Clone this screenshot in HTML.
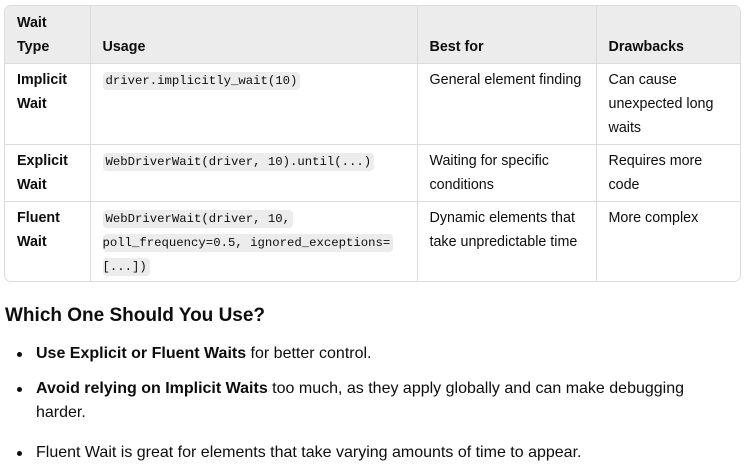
<!DOCTYPE html>
<html><head><meta charset="utf-8"><style>
body{margin:0;background:#fff;color:#0d0d0d;font-family:"Liberation Sans",sans-serif;width:749px;height:469px;overflow:hidden;position:relative}
.tbl{position:absolute;left:4px;top:5px;width:735px;height:275px;border:1px solid #dcdcdc;border-radius:7px;overflow:hidden}
table{border-collapse:collapse;width:100%;font-size:14.3px;line-height:24px;table-layout:fixed}
td,th{border-right:1px solid #dcdcdc;border-bottom:1px solid #dcdcdc;padding:4px 12px 4px 12px;vertical-align:top;text-align:left;white-space:nowrap;line-height:24px}
th{background:#ececec;font-weight:bold;vertical-align:bottom}
tr td:last-child,tr th:last-child{border-right:none}
tr:last-child td{border-bottom:none}
td.b{font-weight:bold}
code{font-family:"Liberation Mono",monospace;font-size:12.3px;line-height:1;background:#ececec;border-radius:4px;padding:2px 3px}
h3{position:absolute;left:5px;top:305px;margin:0;font-size:19px;font-weight:bold}
ul{position:absolute;left:0;top:342px;margin:0;padding:0;list-style:none;font-size:16px;line-height:24px}
li{position:relative;padding-left:36px;width:705px}
li:before{content:"";position:absolute;left:17px;top:10px;width:5px;height:5px;border-radius:50%;background:#0d0d0d}
</style></head><body>
<div class="tbl"><table>
<colgroup><col style="width:85px"><col style="width:327px"><col style="width:179px"><col></colgroup>
<tr style="height:57px"><th>Wait<br>Type</th><th>Usage</th><th>Best for</th><th>Drawbacks</th></tr>
<tr style="height:81px"><td class="b">Implicit<br>Wait</td><td><code>driver.implicitly_wait(10)</code></td><td>General element finding</td><td>Can cause<br>unexpected long<br>waits</td></tr>
<tr style="height:57px"><td class="b">Explicit<br>Wait</td><td><code>WebDriverWait(driver, 10).until(...)</code></td><td>Waiting for specific<br>conditions</td><td>Requires more<br>code</td></tr>
<tr><td class="b">Fluent<br>Wait</td><td><code>WebDriverWait(driver, 10,</code><br><code style="padding-left:0">poll_frequency=0.5, ignored_exceptions=</code><br><code style="padding-left:0">[...])</code></td><td>Dynamic elements that<br>take unpredictable time</td><td>More complex</td></tr>
</table></div>
<h3>Which One Should You Use?</h3>
<ul>
<li style="margin-bottom:11px"><b>Use Explicit or Fluent Waits</b> for better control.</li>
<li style="margin-bottom:16px"><b>Avoid relying on Implicit Waits</b> too much, as they apply globally and can make debugging<br>harder.</li>
<li>Fluent Wait is great for elements that take varying amounts of time to appear.</li>
</ul>
</body></html>
